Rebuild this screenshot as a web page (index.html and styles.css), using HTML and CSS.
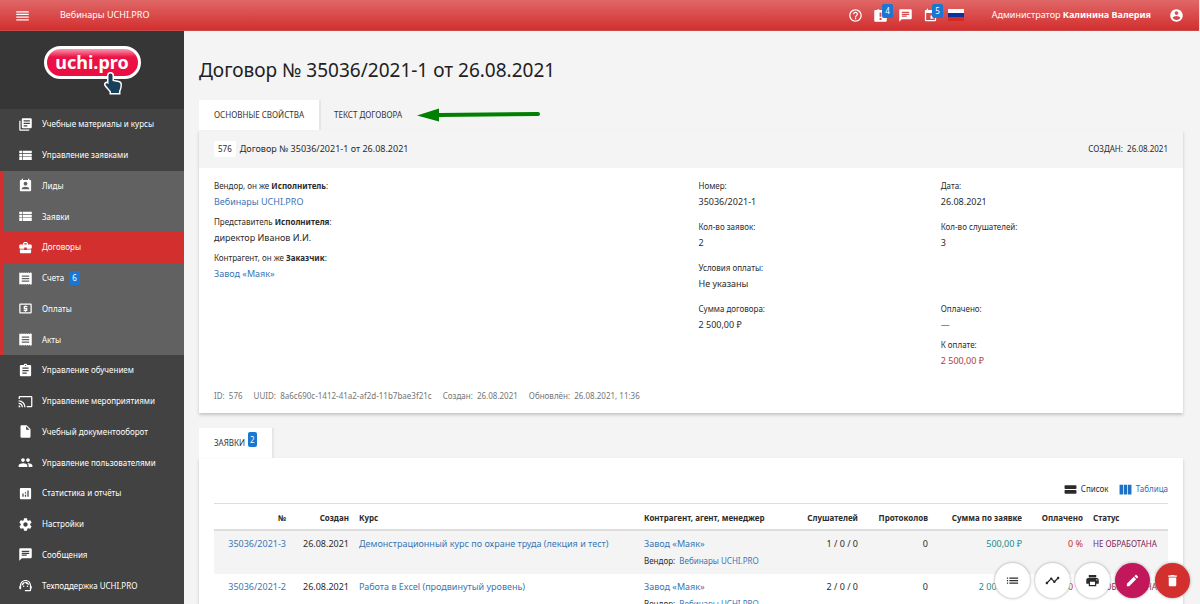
FILE: index.html
```html
<!DOCTYPE html>
<html lang="ru">
<head>
<meta charset="utf-8">
<title>Договор № 35036/2021-1 от 26.08.2021</title>
<link rel="stylesheet" href="styles.css">
</head>
<body>
<svg class="sprite" aria-hidden="true">
  <symbol id="i-menu" viewBox="0 0 24 24"><path d="M2 5h20v2H2zM2 9.300h20v2H2zM2 13.600h20v2H2zM2 18h20v2H2z"/></symbol>
  <symbol id="i-help" viewBox="0 0 24 24"><path d="M11 18h2v-2h-2v2zm1-16C6.480 2 2 6.480 2 12s4.480 10 10 10 10-4.480 10-10S17.520 2 12 2zm0 18c-4.410 0-8-3.590-8-8s3.590-8 8-8 8 3.590 8 8-3.590 8-8 8zm0-14c-2.210 0-4 1.790-4 4h2c0-1.100.9-2 2-2s2 .9 2 2c0 2-3 1.750-3 5h2c0-2.250 3-2.500 3-5 0-2.210-1.790-4-4-4z"/></symbol>
  <symbol id="i-late" viewBox="0 0 24 24"><path d="M2 5c0-1.100.9-2 2-2h3V2h3v1h10c1.100 0 2 .9 2 2v15c0 1.100-.9 2-2 2H4c-1.100 0-2-.9-2-2zm8.500 2v7h3V7zm0 9v3h3v-3z"/></symbol>
  <symbol id="i-chat" viewBox="0 0 24 24"><path d="M20 2H4c-1.100 0-1.990.9-1.990 2L2 22l4-4h14c1.100 0 2-.9 2-2V4c0-1.100-.9-2-2-2zM6 9h12v2H6V9zm8 5H6v-2h8v2zm4-6H6V6h12v2z"/></symbol>
  <symbol id="i-event" viewBox="0 0 24 24"><path d="M17 12h-5v5h5v-5zM16 1v2H8V1H6v2H5c-1.110 0-1.990.9-1.990 2L3 19c0 1.100.89 2 2 2h14c1.100 0 2-.9 2-2V5c0-1.100-.9-2-2-2h-1V1h-2zm3 18H5V8h14v11z"/></symbol>
  <symbol id="i-account" viewBox="0 0 24 24"><path d="M12 2C6.480 2 2 6.480 2 12s4.480 10 10 10 10-4.480 10-10S17.520 2 12 2zm0 3c1.660 0 3 1.340 3 3s-1.340 3-3 3-3-1.340-3-3 1.340-3 3-3zm0 14.200c-2.500 0-4.710-1.280-6-3.220.03-1.990 4-3.080 6-3.080 1.990 0 5.970 1.090 6 3.080-1.290 1.940-3.500 3.220-6 3.220z"/></symbol>
  <symbol id="i-library" viewBox="0 0 24 24"><path d="M4 6H2v14c0 1.100.9 2 2 2h14v-2H4V6zm16-4H8c-1.100 0-2 .9-2 2v12c0 1.100.9 2 2 2h12c1.100 0 2-.9 2-2V4c0-1.100-.9-2-2-2zm-1 9H9V9h10v2zm-4 4H9v-2h6v2zm4-8H9V5h10v2z"/></symbol>
  <symbol id="i-rows" viewBox="0 0 24 24"><path d="M2 4.500h4.500v4H2zM7.500 4.500H22v4H7.500zM2 9.500h4.500v4H2zM7.500 9.500H22v4H7.500zM2 14.500h4.500v4.500H2zM7.500 14.500H22v4.500H7.500z"/></symbol>
  <symbol id="i-contact" viewBox="0 0 24 24"><path d="M19 3h-1V1h-2v2H8V1H6v2H5c-1.110 0-2 .9-2 2v14c0 1.100.89 2 2 2h14c1.100 0 2-.9 2-2V5c0-1.100-.9-2-2-2zm-7 3c1.660 0 3 1.340 3 3s-1.340 3-3 3-3-1.340-3-3 1.340-3 3-3zm6 12H6v-1c0-2 4-3.100 6-3.100s6 1.100 6 3.100v1z"/></symbol>
  <symbol id="i-case" viewBox="0 0 24 24"><path d="M10 16v-1H3.010L3 19c0 1.110.89 2 2 2h14c1.110 0 2-.89 2-2v-4h-7v1h-4zm10-9h-4.010V5l-2-2h-4l-2 2v2H4c-1.100 0-2 .9-2 2v3c0 1.110.89 2 2 2h6v-2h4v2h6c1.100 0 2-.9 2-2V9c0-1.100-.9-2-2-2zm-6 0h-4V5h4v2z"/></symbol>
  <symbol id="i-receipt" viewBox="0 0 24 24"><path d="M18 17H6v-2h12v2zm0-4H6v-2h12v2zm0-4H6V7h12v2zM2 22l1.500-1.500L5 22l1.500-1.500L8 22l1.500-1.500L11 22l1.500-1.500L14 22l1.500-1.500L17 22l1.500-1.500L20 22l2-1V3l-2-1-1.500 1.500L17 2l-1.500 1.500L14 2l-1.500 1.500L11 2 9.500 3.500 8 2 6.500 3.500 5 2 3.500 3.500 2 2z"/></symbol>
  <symbol id="i-money" viewBox="0 0 24 24"><path d="M11 17h2v-1h1c.55 0 1-.45 1-1v-3c0-.55-.45-1-1-1h-3v-1h4V8h-2V7h-2v1h-1c-.55 0-1 .45-1 1v3c0 .55.45 1 1 1h3v1H9v2h2v1zm9-13H4c-1.110 0-1.990.89-1.990 2L2 18c0 1.110.89 2 2 2h16c1.110 0 2-.89 2-2V6c0-1.110-.89-2-2-2zm0 14H4V6h16v12z"/></symbol>
  <symbol id="i-assignment" viewBox="0 0 24 24"><path d="M19 3h-4.180C14.400 1.840 13.300 1 12 1s-2.400.84-2.820 2H5c-1.100 0-2 .9-2 2v14c0 1.100.9 2 2 2h14c1.100 0 2-.9 2-2V5c0-1.100-.9-2-2-2zm-7 0c.55 0 1 .45 1 1s-.45 1-1 1-1-.45-1-1 .45-1 1-1zm2 14H7v-2h7v2zm3-4H7v-2h10v2zm0-4H7V7h10v2z"/></symbol>
  <symbol id="i-cast" viewBox="0 0 24 24"><path d="M21 3H3c-1.100 0-2 .9-2 2v3h2V5h18v14h-7v2h7c1.100 0 2-.9 2-2V5c0-1.100-.9-2-2-2zM1 18v3h3c0-1.660-1.340-3-3-3zm0-4v2c2.760 0 5 2.240 5 5h2c0-3.870-3.130-7-7-7zm0-4v2c4.970 0 9 4.030 9 9h2c0-6.080-4.930-11-11-11z"/></symbol>
  <symbol id="i-file" viewBox="0 0 24 24"><path d="M6 2c-1.100 0-1.990.9-1.990 2L4 20c0 1.100.89 2 1.990 2H18c1.100 0 2-.9 2-2V8l-6-6H6zm7 7V3.500L18.500 9H13z"/></symbol>
  <symbol id="i-people" viewBox="0 0 24 24"><path d="M16 11c1.660 0 2.990-1.340 2.990-3S17.660 5 16 5s-3 1.340-3 3 1.340 3 3 3zm-8 0c1.660 0 2.990-1.340 2.990-3S9.660 5 8 5 5 6.340 5 8s1.340 3 3 3zm0 2c-2.330 0-7 1.170-7 3.500V19h14v-2.500c0-2.330-4.670-3.500-7-3.500zm8 0c-.29 0-.62.02-.97.05 1.160.84 1.970 1.970 1.970 3.450V19h6v-2.500c0-2.330-4.670-3.500-7-3.500z"/></symbol>
  <symbol id="i-stats" viewBox="0 0 24 24"><path d="M19 3H5c-1.100 0-2 .9-2 2v14c0 1.100.9 2 2 2h14c1.100 0 2-.9 2-2V5c0-1.100-.9-2-2-2zM9 17H7v-5h2v5zm4 0h-2v-3h2v3zm0-5h-2v-2h2v2zm4 5h-2V7h2v10z"/></symbol>
  <symbol id="i-gear" viewBox="0 0 24 24"><path d="M19.430 12.980c.04-.32.07-.64.07-.98s-.03-.66-.07-.98l2.110-1.650c.19-.15.24-.42.12-.64l-2-3.460c-.12-.22-.39-.3-.61-.22l-2.490 1c-.52-.4-1.080-.73-1.690-.98l-.38-2.650C14.460 2.180 14.250 2 14 2h-4c-.25 0-.46.18-.49.42l-.38 2.650c-.61.25-1.170.59-1.690.98l-2.490-1c-.23-.09-.49 0-.61.22l-2 3.460c-.13.22-.07.49.12.64l2.110 1.650c-.04.32-.07.65-.07.98s.03.66.07.98l-2.110 1.650c-.19.15-.24.42-.12.64l2 3.460c.12.22.39.3.61.22l2.490-1c.52.4 1.080.73 1.690.98l.38 2.650c.03.24.24.42.49.42h4c.25 0 .46-.18.49-.42l.38-2.650c.61-.25 1.170-.59 1.690-.98l2.490 1c.23.09.49 0 .61-.22l2-3.460c.12-.22.07-.49-.12-.64l-2.110-1.650zM12 15.500c-1.930 0-3.500-1.570-3.500-3.500s1.570-3.500 3.500-3.500 3.500 1.570 3.500 3.500-1.570 3.500-3.500 3.500z"/></symbol>
  <symbol id="i-agent" viewBox="0 0 24 24"><path d="M21 12.220C21 6.730 16.740 3 12 3c-4.690 0-9 3.650-9 9.280-.6.340-1 .98-1 1.720v2c0 1.100.9 2 2 2h1v-6.100c0-3.870 3.130-7 7-7s7 3.130 7 7V19h-8v2h8c1.100 0 2-.9 2-2v-1.220c.59-.31 1-.92 1-1.640v-2.300c0-.7-.41-1.310-1-1.620z"/><circle cx="9" cy="13" r="1.200"/><circle cx="15" cy="13" r="1.200"/><path d="M18 11.030C17.520 8.180 15.040 6 12.050 6c-3.030 0-6.290 2.510-6.030 6.450 2.470-1.010 4.330-3.210 4.860-5.890 1.310 2.630 4 4.440 7.120 4.470z"/></symbol>
  <symbol id="i-stack" viewBox="0 0 24 24"><rect x="1" y="4" width="22" height="7" rx="1.500"/><rect x="1" y="13" width="22" height="7" rx="1.500"/></symbol>
  <symbol id="i-columns" viewBox="0 0 24 24"><path d="M1 3h6.500v18H1zM8.800 3h6.400v18H8.800zM16.500 3H23v18h-6.500z"/></symbol>
  <symbol id="i-list" viewBox="0 0 24 24"><path d="M3 13h2v-2H3v2zm0 4h2v-2H3v2zm0-8h2V7H3v2zm4 4h14v-2H7v2zm0 4h14v-2H7v2zM7 7v2h14V7H7z"/></symbol>
  <symbol id="i-timeline" viewBox="0 0 24 24"><path d="M23 8c0 1.100-.9 2-2 2-.18 0-.35-.02-.51-.07l-3.560 3.550c.05.16.07.34.07.52 0 1.100-.9 2-2 2s-2-.9-2-2c0-.18.02-.36.07-.52l-2.550-2.550c-.16.05-.34.07-.52.07s-.36-.02-.52-.07l-4.550 4.560c.05.160.07.330.07.510 0 1.100-.9 2-2 2s-2-.9-2-2 .9-2 2-2c.18 0 .35.020.51.070l4.560-4.550C8.020 9.360 8 9.180 8 9c0-1.100.9-2 2-2s2 .9 2 2c0 .18-.02.36-.07.52l2.550 2.550c.16-.05.34-.07.52-.07s.36.020.52.070l3.550-3.560C19.020 8.350 19 8.180 19 8c0-1.100.9-2 2-2s2 .9 2 2z"/></symbol>
  <symbol id="i-print" viewBox="0 0 24 24"><path d="M19 8H5c-1.660 0-3 1.340-3 3v6h4v4h12v-4h4v-6c0-1.660-1.340-3-3-3zm-3 11H8v-5h8v5zm3-7c-.55 0-1-.45-1-1s.45-1 1-1 1 .45 1 1-.45 1-1 1zm-1-9H6v4h12V3z"/></symbol>
  <symbol id="i-edit" viewBox="0 0 24 24"><path d="M3 17.250V21h3.750L17.810 9.940l-3.750-3.750L3 17.250zM20.710 7.040c.39-.39.39-1.020 0-1.410l-2.340-2.340c-.39-.39-1.020-.39-1.410 0l-1.830 1.830 3.750 3.750 1.830-1.830z"/></symbol>
  <symbol id="i-delete" viewBox="0 0 24 24"><path d="M6 19c0 1.100.9 2 2 2h8c1.100 0 2-.9 2-2V7H6v12zM19 4h-3.500l-1-1h-5l-1 1H5v2h14V4z"/></symbol>
</svg>

<div class="app">
  <header class="topbar">
    <button class="icon-btn" aria-label="Меню"><svg class="icon"><use href="#i-menu"/></svg></button>
    <a class="brand" href="#">Вебинары UCHI.PRO</a>
    <div class="tools">
      <button class="icon-btn" aria-label="Справка"><svg class="icon"><use href="#i-help"/></svg></button>
      <button class="icon-btn" aria-label="Задачи"><svg class="icon"><use href="#i-late"/></svg><span class="badge floating">4</span></button>
      <button class="icon-btn" aria-label="Чат"><svg class="icon"><use href="#i-chat"/></svg></button>
      <button class="icon-btn" aria-label="Календарь"><svg class="icon"><use href="#i-event"/></svg><span class="badge floating">5</span></button>
      <button class="flag" aria-label="Русский"></button>
    </div>
    <a class="user" href="#">Администратор <b>Калинина Валерия</b></a>
    <button class="icon-btn" aria-label="Профиль"><svg class="icon"><use href="#i-account"/></svg></button>
  </header>

  <div class="frame">
    <aside class="sidebar">
      <a class="logo" href="#" aria-label="uchi.pro">
        <span class="pill">uchi.pro</span>
        <svg class="hand" viewBox="0 0 18 24"><path d="M6.500 2.500c1.200 0 2 .8 2 2V10l6 1.200c1.400.3 2 1.200 2 2.500-.1 2.800-.4 4-1.500 6.300V22H7v-1.500C5.500 18.500 3.500 16.500 1.700 14c-.7-1.200.5-2.300 1.600-1.700l1.200 1V4.500c0-1.200.8-2 2-2z"/></svg>
      </a>
      <nav class="menu">
        <a href="#"><svg class="icon"><use href="#i-library"/></svg>Учебные материалы и курсы</a>
        <a href="#"><svg class="icon"><use href="#i-rows"/></svg>Управление заявками</a>
        <a class="sub" href="#"><svg class="icon"><use href="#i-contact"/></svg>Лиды</a>
        <a class="sub" href="#"><svg class="icon"><use href="#i-rows"/></svg>Заявки</a>
        <a class="sub active" href="#"><svg class="icon"><use href="#i-case"/></svg>Договоры</a>
        <a class="sub" href="#"><svg class="icon"><use href="#i-receipt"/></svg>Счета<span class="badge">6</span></a>
        <a class="sub" href="#"><svg class="icon"><use href="#i-money"/></svg>Оплаты</a>
        <a class="sub" href="#"><svg class="icon"><use href="#i-receipt"/></svg>Акты</a>
        <a href="#"><svg class="icon"><use href="#i-assignment"/></svg>Управление обучением</a>
        <a href="#"><svg class="icon"><use href="#i-cast"/></svg>Управление мероприятиями</a>
        <a href="#"><svg class="icon"><use href="#i-file"/></svg>Учебный документооборот</a>
        <a href="#"><svg class="icon"><use href="#i-people"/></svg>Управление пользователями</a>
        <a href="#"><svg class="icon"><use href="#i-stats"/></svg>Статистика и отчёты</a>
        <a href="#"><svg class="icon"><use href="#i-gear"/></svg>Настройки</a>
        <a href="#"><svg class="icon"><use href="#i-chat"/></svg>Сообщения</a>
        <a href="#"><svg class="icon"><use href="#i-agent"/></svg>Техподдержка UCHI.PRO</a>
      </nav>
    </aside>

    <main class="content">
      <h1>Договор № 35036/2021-1 от 26.08.2021</h1>

      <div class="tabs">
        <button class="tab current">ОСНОВНЫЕ СВОЙСТВА</button>
        <button class="tab">ТЕКСТ ДОГОВОРА</button>
        <svg class="arrow" viewBox="0 0 124 14"><path d="M0 7.500 22 0.500v4.500L121 4a2 2 0 0 1 0 4L22 9v4.500z"/></svg>
      </div>
      <section class="card">
        <header class="card-head">
          <span class="num">576</span>
          <span class="name">Договор № 35036/2021-1 от 26.08.2021</span>
          <span class="created">СОЗДАН:&nbsp; 26.08.2021</span>
        </header>
        <div class="props">
          <dl class="fields parties">
            <div><dt>Вендор, он же <b>Исполнитель</b>:</dt><dd><a href="#">Вебинары UCHI.PRO</a></dd></div>
            <div><dt>Представитель <b>Исполнителя</b>:</dt><dd>директор Иванов И.И.</dd></div>
            <div><dt>Контрагент, он же <b>Заказчик</b>:</dt><dd><a href="#">Завод «Маяк»</a></dd></div>
          </dl>
          <dl class="fields details">
            <div><dt>Номер:</dt><dd>35036/2021-1</dd></div>
            <div><dt>Дата:</dt><dd>26.08.2021</dd></div>
            <div><dt>Кол-во заявок:</dt><dd>2</dd></div>
            <div><dt>Кол-во слушателей:</dt><dd>3</dd></div>
            <div class="wide"><dt>Условия оплаты:</dt><dd>Не указаны</dd></div>
            <div><dt>Сумма договора:</dt><dd>2 500,00 ₽</dd></div>
            <div><dt>Оплачено:</dt><dd>—</dd><dt class="next">К оплате:</dt><dd class="due">2 500,00 ₽</dd></div>
          </dl>
        </div>
        <footer class="meta">
          <span>ID:&nbsp; 576</span>
          <span>UUID:&nbsp; 8a6c690c-1412-41a2-af2d-11b7bae3f21c</span>
          <span>Создан:&nbsp; 26.08.2021</span>
          <span>Обновлён:&nbsp; 26.08.2021, 11:36</span>
        </footer>
      </section>

      <div class="tabs">
        <button class="tab current">ЗАЯВКИ<span class="badge raised">2</span></button>
      </div>
      <section class="card orders">
        <div class="views">
          <button class="view"><svg class="icon"><use href="#i-stack"/></svg>Список</button>
          <button class="view on"><svg class="icon"><use href="#i-columns"/></svg>Таблица</button>
        </div>
        <table>
          <colgroup><col class="c-no"><col class="c-date"><col><col class="c-party"><col class="c-people"><col class="c-prot"><col class="c-sum"><col class="c-paid"><col class="c-state"></colgroup>
          <thead>
            <tr><th class="r">№</th><th class="r">Создан</th><th>Курс</th><th>Контрагент, агент, менеджер</th><th class="r">Слушателей</th><th class="r">Протоколов</th><th class="r">Сумма по заявке</th><th class="r">Оплачено</th><th>Статус</th></tr>
          </thead>
          <tbody>
            <tr>
              <td class="r"><a href="#">35036/2021-3</a></td><td class="r">26.08.2021</td>
              <td><a href="#">Демонстрационный курс по охране труда (лекция и тест)</a></td>
              <td><a href="#">Завод «Маяк»</a><p class="vendor">Вендор:&nbsp; <a href="#">Вебинары UCHI.PRO</a></p></td>
              <td class="r">1 / 0 / 0</td><td class="r">0</td><td class="r sum">500,00 ₽</td><td class="r paid">0 %</td><td class="state">НЕ ОБРАБОТАНА</td>
            </tr>
            <tr>
              <td class="r"><a href="#">35036/2021-2</a></td><td class="r">26.08.2021</td>
              <td><a href="#">Работа в Excel (продвинутый уровень)</a></td>
              <td><a href="#">Завод «Маяк»</a><p class="vendor">Вендор:&nbsp; <a href="#">Вебинары UCHI.PRO</a></p></td>
              <td class="r">2 / 0 / 0</td><td class="r">0</td><td class="r sum">2 000,00 ₽</td><td class="r paid">0 %</td><td class="state">НЕ ОБРАБОТАНА</td>
            </tr>
          </tbody>
        </table>
      </section>
    </main>
  </div>

  <div class="actions">
    <button aria-label="Список"><svg class="icon"><use href="#i-list"/></svg></button>
    <button aria-label="История"><svg class="icon"><use href="#i-timeline"/></svg></button>
    <button aria-label="Печать"><svg class="icon"><use href="#i-print"/></svg></button>
    <button class="edit" aria-label="Изменить"><svg class="icon"><use href="#i-edit"/></svg></button>
    <button class="delete" aria-label="Удалить"><svg class="icon"><use href="#i-delete"/></svg></button>
  </div>
</div>
</body>
</html>
```

FILE: styles.css
```css
* { box-sizing: border-box; }

body {
  margin: 0;
  background: #f4f4f4;
  color: #2b2b2b;
  font: 9px/16px "Noto Sans", "Open Sans", sans-serif;
}

a { color: #3a76b4; text-decoration: none; }

button {
  margin: 0;
  padding: 0;
  border: 0;
  background: none;
  color: inherit;
  font: inherit;
  cursor: pointer;
}

.sprite { position: absolute; width: 0; height: 0; }

.icon {
  display: block;
  flex: none;
  width: 15px;
  height: 15px;
  fill: currentColor;
}

.badge {
  padding: 0 3px;
  border-radius: 2px;
  background: #1976d2;
  color: #fff;
  font-size: 8px;
  line-height: 14px;
}

.app {
  display: flex;
  flex-direction: column;
  height: 100vh;
}

/* Top bar */

.topbar {
  display: flex;
  flex: none;
  align-items: center;
  height: 31px;
  margin-right: 1px;
  padding: 0 15px;
  border-bottom: 1px solid #c94a4a;
  background: linear-gradient(#e06767, #d32f2f);
  color: #fff;
}

.icon-btn { position: relative; }

.brand {
  margin-left: 30px;
  color: #fff;
}

.tools {
  display: flex;
  align-items: center;
  gap: 10px;
  margin-left: auto;
}

.floating {
  position: absolute;
  top: -4px;
  right: -5px;
}

.flag {
  width: 16px;
  height: 12px;
  background: linear-gradient(#fff 33%, #0d2f9f 33% 67%, #d52b1e 67%);
}

.user {
  margin: 0 18px 0 28px;
  color: #fff;
}

/* Sidebar */

.frame {
  display: flex;
  flex: 1;
  min-height: 0;
}

.sidebar {
  display: flex;
  flex: none;
  flex-direction: column;
  width: 184px;
  background: #424242;
}

.logo {
  position: relative;
  display: flex;
  justify-content: center;
  flex: none;
  height: 78px;
  padding-top: 15px;
  background: #363636;
}

.pill {
  width: 97px;
  height: 33px;
  border: 3px solid #fff;
  border-radius: 17px;
  background: linear-gradient(#f598ad, #ec1246 30%, #e90f43);
  color: #fff;
  font: bold 18px/26px "Noto Sans", sans-serif;
  text-align: center;
}

.hand {
  position: absolute;
  top: 40px;
  left: 104px;
  width: 18px;
  height: 24px;
  fill: #17405a;
  stroke: #fff;
  stroke-width: 3;
  paint-order: stroke;
}

.menu {
  display: grid;
  flex: 1;
  grid-auto-rows: minmax(24px, 1fr);
  padding-bottom: 3px;
  font-size: 8px;
}

.menu a {
  display: flex;
  align-items: center;
  padding-left: 18px;
  color: #fff;
}

.menu .icon { margin-right: 9px; }

.menu .badge { margin-left: 5px; }

.menu .sub {
  padding-left: 15px;
  border-left: 3px solid #d32f2f;
  background: #616161;
}

.menu .active { background: #d32f2f; }

/* Main column */

.content {
  flex: 1;
  min-width: 0;
  padding: 26px 17px 60px 15px;
  overflow-y: auto;
  scrollbar-width: none;
}

h1 {
  margin: 0 0 17px;
  color: #212121;
  font-size: 19px;
  font-weight: 400;
  line-height: 26px;
}

.tabs {
  display: flex;
  align-items: center;
}

.tab {
  height: 30px;
  padding: 0 15px;
  font-size: 8px;
  color: #333;
}

.tab.current {
  background: #fff;
  box-shadow: 2px 0 1px #e6e6e6;
}

.raised {
  position: relative;
  top: -3px;
  margin-left: 3px;
  padding: 2px;
}

.arrow {
  width: 124px;
  height: 14px;
  fill: #008000;
}

.card {
  margin-bottom: 15px;
  background: #fff;
  box-shadow: 0 2px 3px #c4c4c4;
}

.card-head {
  display: flex;
  align-items: center;
  height: 38px;
  padding: 0 15px;
  background: #f4f4f4;
}

.num {
  padding: 0 4px;
  border-radius: 2px;
  background: #fff;
  font-size: 8px;
}

.name { margin-left: 4px; }

.created {
  margin-left: auto;
  font-size: 8px;
}

.props {
  display: grid;
  grid-template-columns: 1fr 1fr;
  gap: 15px;
  padding: 11px 15px 9px;
}

.fields {
  display: grid;
  align-content: start;
  margin: 0;
}

.parties { row-gap: 5px; }

.details {
  grid-template-columns: 1fr 1fr;
  gap: 10px 15px;
}

.wide { grid-column: span 2; }

dt {
  font-size: 8px;
  line-height: 14px;
}

dd { margin: 1px 0 0; }

.next { margin-top: 5px; }

.due { color: #b23b3b; }

.meta {
  display: flex;
  gap: 11px;
  padding: 10px 15px 9px;
  color: #757575;
  font-size: 8px;
}

/* Orders table */

.orders { padding: 23px 15px; }

.views {
  display: flex;
  justify-content: flex-end;
  gap: 10px;
  margin-bottom: 6px;
  font-size: 8px;
}

.view {
  display: flex;
  align-items: center;
  gap: 4px;
}

.view .icon { width: 13px; height: 13px; }

.view.on { color: #1f71c4; }

table {
  width: 100%;
  border-collapse: collapse;
  table-layout: fixed;
}

.c-no { width: 77px; }
.c-date { width: 63px; }
.c-party { width: 157px; }
.c-people { width: 67px; }
.c-prot { width: 70px; }
.c-sum { width: 94px; }
.c-paid { width: 61px; }
.c-state { width: 80px; }

th,
td {
  padding: 5px;
  text-align: left;
  vertical-align: top;
  white-space: nowrap;
}

th {
  padding: 6px 5px 3px;
  border-top: 1px solid #ddd;
  border-bottom: 2px solid #ddd;
  font-size: 8px;
}

.r { text-align: right; }

tbody tr:nth-child(odd) { background: #f4f4f4; }

.vendor { margin: 1px 0 0; font-size: 8px; }

.sum { color: #1c8c88; }

.paid { color: #c9302c; }

.state { color: #7b1f5c; font-size: 8px; }

/* Floating actions */

.actions {
  position: fixed;
  right: 10px;
  bottom: 6px;
  display: flex;
  gap: 5px;
}

.actions button {
  display: flex;
  align-items: center;
  justify-content: center;
  width: 35px;
  height: 35px;
  border-radius: 50%;
  background: #fff;
  box-shadow: 0 0 3px #999;
}

.actions .edit { background: #c2185b; color: #fff; }

.actions .delete { background: #d32f2f; color: #fff; }
```
